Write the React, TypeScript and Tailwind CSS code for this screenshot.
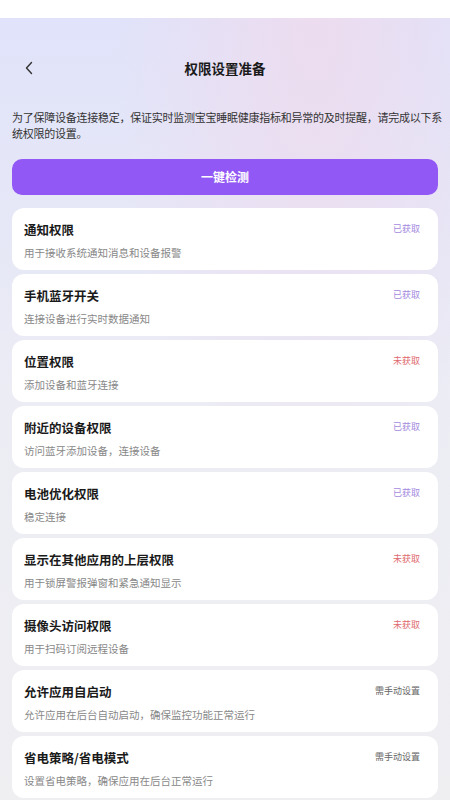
const items = [
  { title: '通知权限', desc: '用于接收系统通知消息和设备报警', status: '已获取' },
  { title: '手机蓝牙开关', desc: '连接设备进行实时数据通知', status: '已获取' },
  { title: '位置权限', desc: '添加设备和蓝牙连接', status: '未获取' },
  { title: '附近的设备权限', desc: '访问蓝牙添加设备，连接设备', status: '已获取' },
  { title: '电池优化权限', desc: '稳定连接', status: '已获取' },
  { title: '显示在其他应用的上层权限', desc: '用于锁屏警报弹窗和紧急通知显示', status: '未获取' },
  { title: '摄像头访问权限', desc: '用于扫码订阅远程设备', status: '未获取' },
  { title: '允许应用自启动', desc: '允许应用在后台自动启动，确保监控功能正常运行', status: '需手动设置' },
  { title: '省电策略/省电模式', desc: '设置省电策略，确保应用在后台正常运行', status: '需手动设置' },
];

function statusColor(s: string) {
  if (s === '已获取') return 'text-[#a48ae0]';
  if (s === '未获取') return 'text-[#e06a6e]';
  return 'text-[#666666]';
}

export default function App() {
  return (
    <div className="w-[450px] h-[800px] overflow-hidden bg-white flex flex-col font-['Noto_Sans_CJK_SC',sans-serif]">
      <div className="h-[18px] bg-white shrink-0" />
      <div className="flex-1 px-3 bg-[radial-gradient(ellipse_at_70%_0%,#eddcef_0%,transparent_45%),linear-gradient(180deg,#e0e3fa_0%,#e6e7f7_25%,#ecedf4_50%,#efeff2_100%)]">
        <div className="mt-[28px] h-[44px] flex items-center relative">
          <svg className="absolute left-[12px] top-[15px]" width="10" height="14" viewBox="0 0 10 14" fill="none">
            <path d="M7.5 1.5L2.5 7L7.5 12.5" stroke="#333" strokeWidth="1.4" strokeLinecap="round" strokeLinejoin="round" />
          </svg>
          <div className="flex-1 text-center text-[13.5px] font-bold text-[#1a1a1a]">权限设置准备</div>
        </div>
        <p className="mt-[19px] mr-[-10px] text-[11px] tracking-[-0.25px] leading-[16px] text-[#333333]">
          为了保障设备连接稳定，保证实时监测宝宝睡眠健康指标和异常的及时提醒，请完成以下系统权限的设置。
        </p>
        <div className="mt-[18px] h-[36px] rounded-[10px] bg-[#9258f5] flex items-center justify-center text-white text-[12px] font-bold">
          一键检测
        </div>
        <div className="mt-[13px] flex flex-col gap-[4px]">
          {items.map((it) => (
            <div key={it.title} className="h-[62px] rounded-[12px] bg-white pl-3 pr-[18px] flex justify-between">
              <div className="pt-[13px]">
                <div className="text-[12.5px] leading-[18px] font-bold text-[#1a1a1a]">{it.title}</div>
                <div className="mt-[6px] text-[10.5px] leading-[16px] text-[#888888]">{it.desc}</div>
              </div>
              <div className={`pt-[14px] text-[9px] leading-[14px] ${statusColor(it.status)}`}>{it.status}</div>
            </div>
          ))}
        </div>
      </div>
    </div>
  );
}
